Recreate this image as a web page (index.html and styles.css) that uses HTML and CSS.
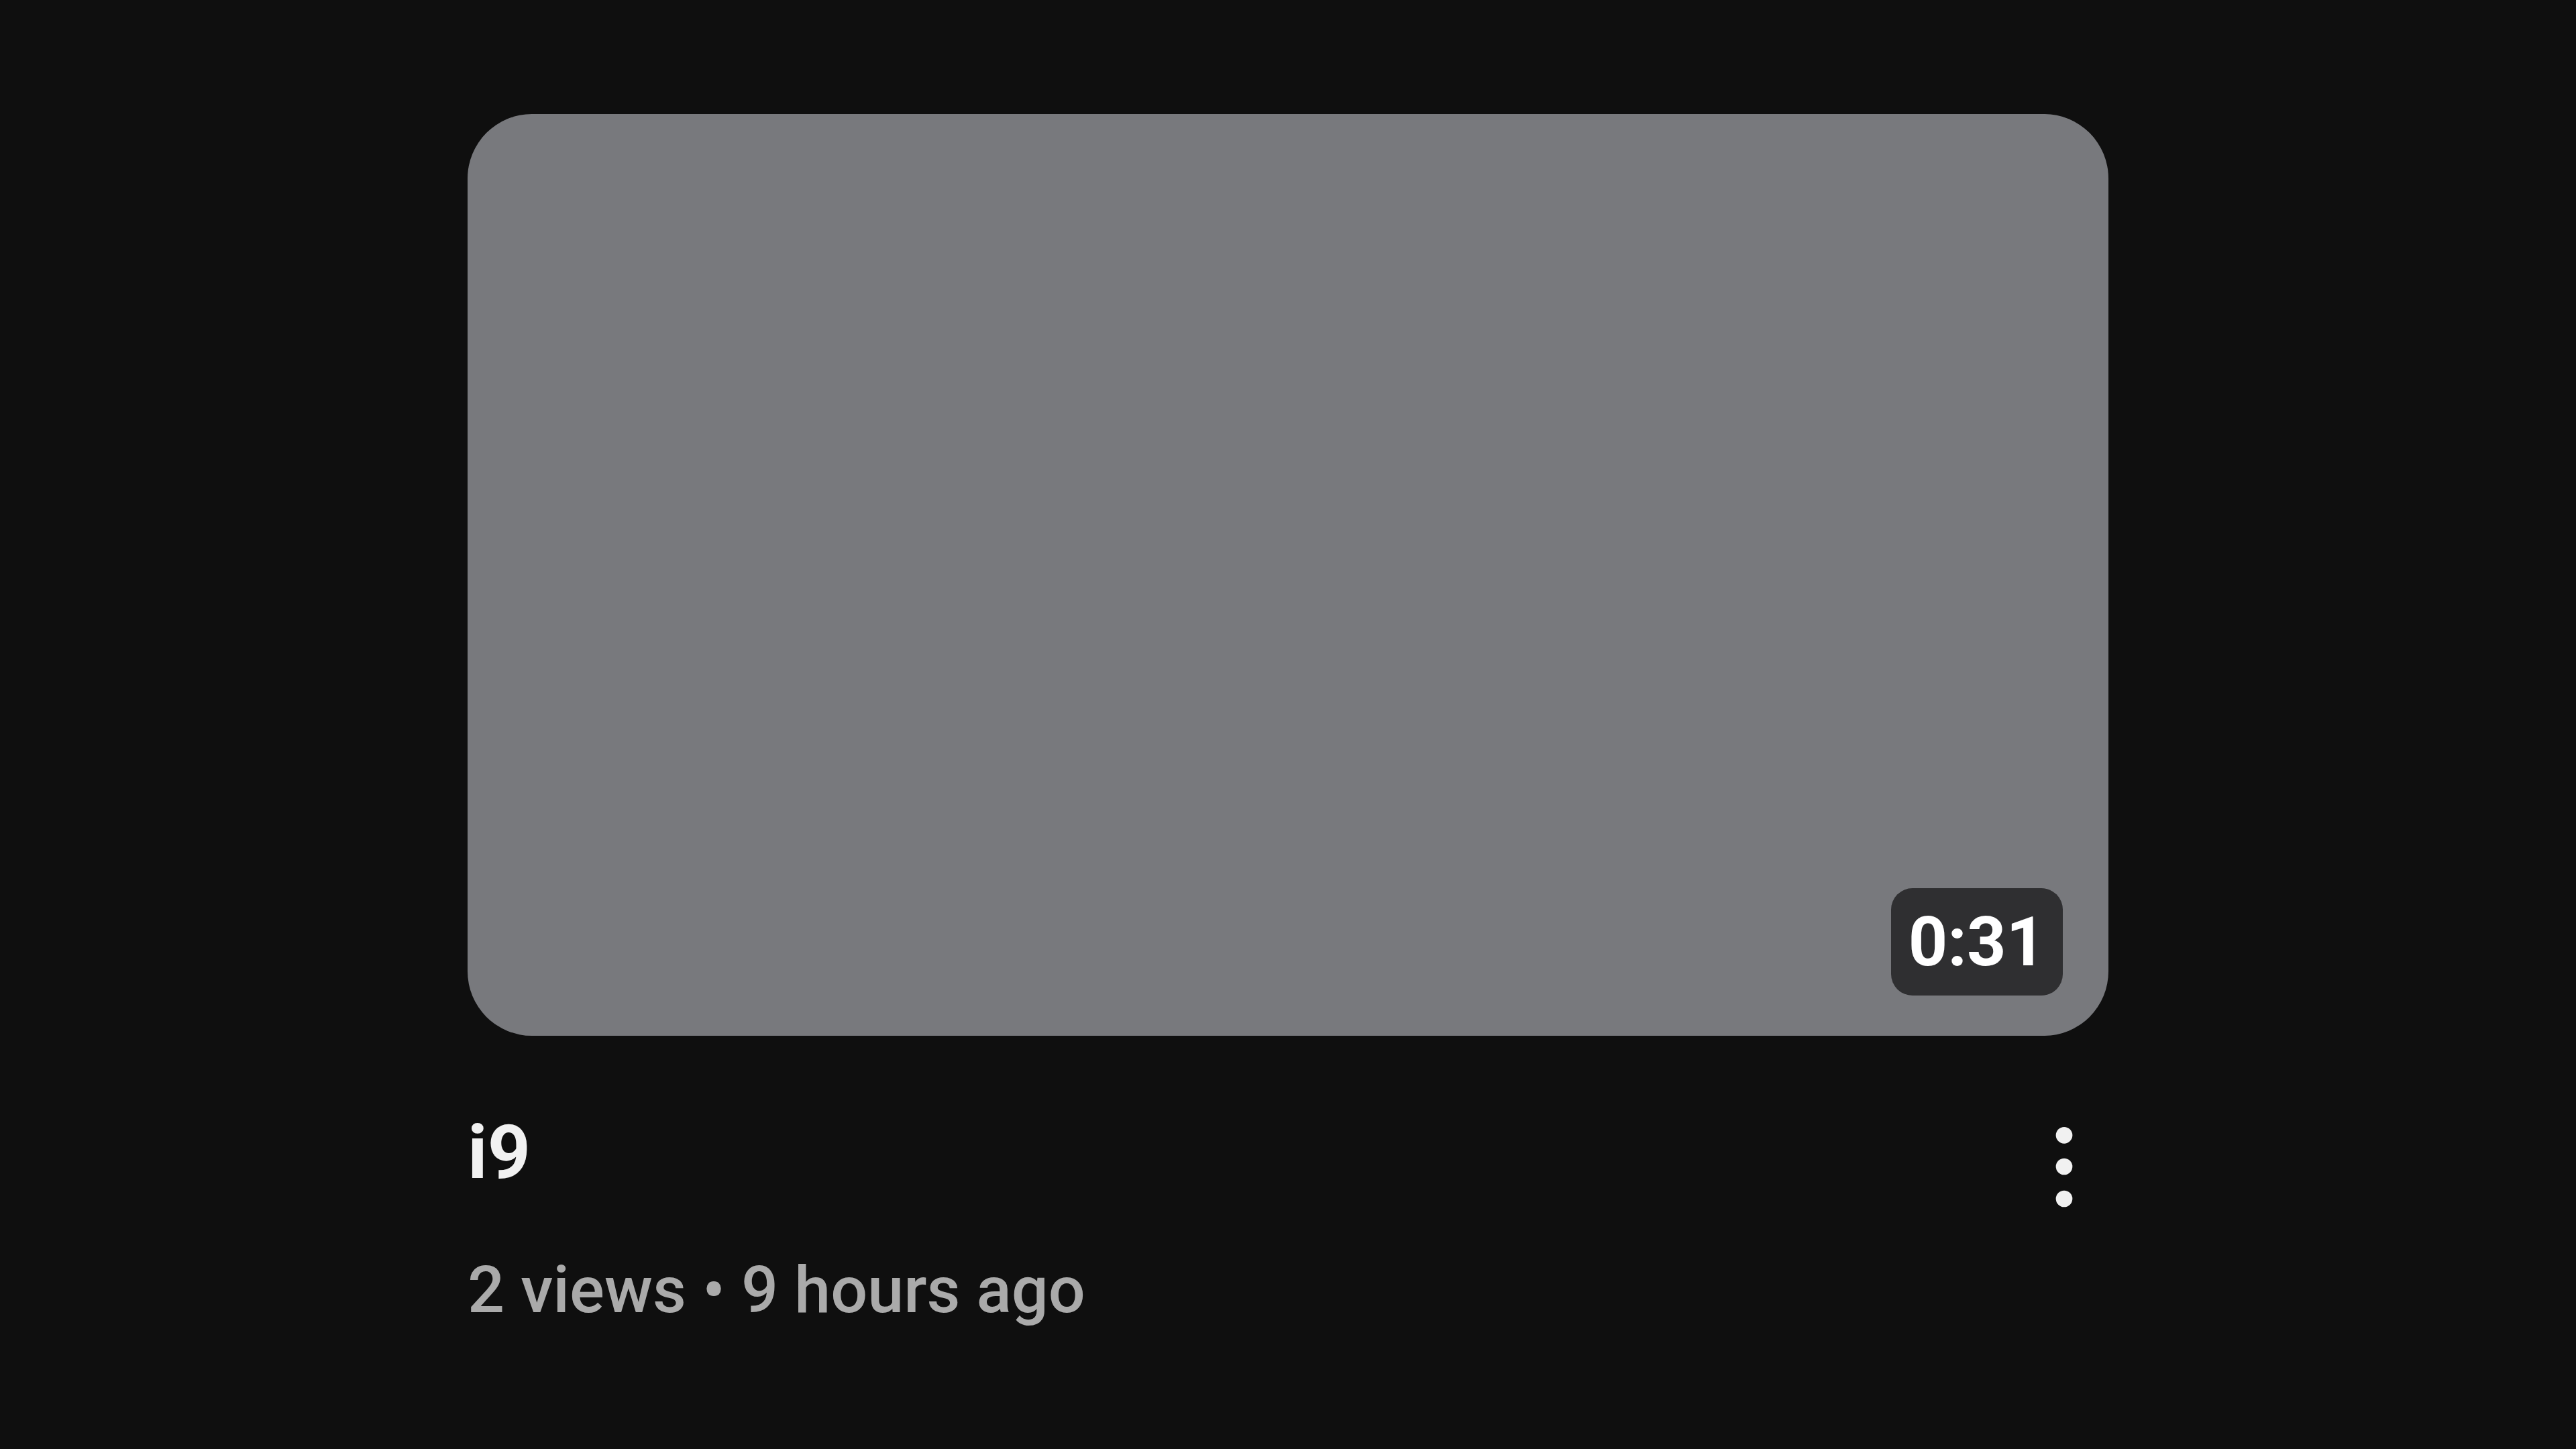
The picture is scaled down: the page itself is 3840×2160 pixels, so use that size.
FILE: index.html
```html
<!DOCTYPE html>
<html lang="en">
<head>
<meta charset="utf-8">
<title>i9</title>
<link rel="stylesheet" href="styles.css">
</head>
<body>
<main class="page">
  <article class="card">
    <div class="thumb">
      <span class="duration">0:31</span>
    </div>
    <div class="details">
      <div class="text">
        <h3 class="title">i9</h3>
        <div class="meta">2 views • 9 hours ago</div>
      </div>
      <button class="menu" aria-label="More actions">
        <svg viewBox="0 0 24 24" width="160" height="160" aria-hidden="true">
          <circle cx="12" cy="5" r="1.85" fill="#f1f1f1"/>
          <circle cx="12" cy="12" r="1.85" fill="#f1f1f1"/>
          <circle cx="12" cy="19.2" r="1.85" fill="#f1f1f1"/>
        </svg>
      </button>
    </div>
  </article>
</main>
</body>
</html>
```
FILE: styles.css
```css
html, body {
  margin: 0;
  padding: 0;
  background: #0f0f0f;
}
body {
  width: 3840px;
  height: 2160px;
  overflow: hidden;
  font-family: Roboto, "Liberation Sans", Arial, sans-serif;
}
.page {
  padding: 170px 0 0 697px;
}
.card {
  width: 2446px;
}
.thumb {
  position: relative;
  height: 1374px;
  background: #78797d;
  border-radius: 96px;
}
.duration {
  position: absolute;
  right: 68px;
  bottom: 60px;
  height: 160px;
  line-height: 160px;
  padding: 0 26px;
  background: #2f2f31;
  color: #ffffff;
  border-radius: 32px;
  font-size: 102px;
  font-weight: 700;
}
.details {
  display: flex;
  align-items: flex-start;
  margin-top: 104px;
}
.text {
  flex: 1;
}
.title {
  margin: 0;
  color: #f1f1f1;
  font-size: 112px;
  line-height: 140px;
  font-weight: 700;
}
.meta {
  margin-top: 67px;
  color: #aaaaaa;
  font-size: 97px;
  line-height: 137px;
  font-weight: 500;
}
.menu {
  flex: none;
  width: 160px;
  height: 160px;
  margin: 11px -14px 0 0;
  padding: 0;
  border: 0;
  background: transparent;
}
.menu svg {
  display: block;
}
```
